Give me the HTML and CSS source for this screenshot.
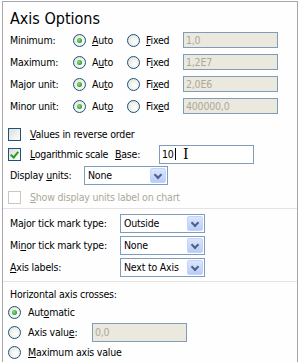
FILE: index.html
```html
<!DOCTYPE html>
<html>

<head>
  <title>Format Axis - Axis Options</title>
  <link rel="stylesheet" href="styles.css">
</head>

<body>
  <div class="panel">
    <h1 class="title">Axis Options</h1>

    <div class="bounds">
      <div class="bound">
        <span class="label">Minimum:</span>
        <span class="radio on"></span><span class="opt"><u>A</u>uto</span>
        <span class="radio"></span><span class="opt fixed"><u>F</u>ixed</span>
        <span class="field off">1,0</span>
      </div>
      <div class="bound">
        <span class="label">Maximum:</span>
        <span class="radio on"></span><span class="opt">A<u>u</u>to</span>
        <span class="radio"></span><span class="opt fixed">F<u>i</u>xed</span>
        <span class="field off">1,2E7</span>
      </div>
      <div class="bound">
        <span class="label">Major unit:</span>
        <span class="radio on"></span><span class="opt">Au<u>t</u>o</span>
        <span class="radio"></span><span class="opt fixed">Fi<u>x</u>ed</span>
        <span class="field off">2,0E6</span>
      </div>
      <div class="bound">
        <span class="label">Minor unit:</span>
        <span class="radio on"></span><span class="opt">Aut<u>o</u></span>
        <span class="radio"></span><span class="opt fixed">Fix<u>e</u>d</span>
        <span class="field off">400000,0</span>
      </div>
    </div>

    <div class="check-row first">
      <span class="check"></span><span><u>V</u>alues in reverse order</span>
    </div>
    <div class="check-row">
      <span class="check on"></span><span class="log-label"><u>L</u>ogarithmic scale</span>
      <span class="base-label"><u>B</u>ase:</span>
      <span class="field base">10<span class="caret"></span><span class="ibeam">I</span></span>
    </div>
    <div class="line-row">
      <span class="units-label">Display <u>u</u>nits:</span>
      <span class="select units">None<span class="drop"></span></span>
    </div>
    <div class="check-row tall dim">
      <span class="check off"></span><span><u>S</u>how display units label on chart</span>
    </div>

    <hr class="rule">

    <div class="tick-rows">
      <div class="line-row">
        <span class="tick-label">Ma<u>j</u>or tick mark type:</span>
        <span class="select">Outside<span class="drop"></span></span>
      </div>
      <div class="line-row">
        <span class="tick-label">Mi<u>n</u>or tick mark type:</span>
        <span class="select">None<span class="drop"></span></span>
      </div>
      <div class="line-row">
        <span class="tick-label"><u>A</u>xis labels:</span>
        <span class="select">Next to Axis<span class="drop"></span></span>
      </div>
    </div>

    <hr class="rule">

    <div class="group-label">Horizontal axis crosses:</div>
    <div class="cross-row">
      <span class="radio on"></span><span>Aut<u>o</u>matic</span>
    </div>
    <div class="cross-row">
      <span class="radio"></span><span class="value-label">Axis valu<u>e</u>:</span>
      <span class="field off short">0,0</span>
    </div>
    <div class="cross-row">
      <span class="radio"></span><span><u>M</u>aximum axis value</span>
    </div>
  </div>
</body>

</html>
```

FILE: styles.css
```css
body {
  margin: 0;
  background: #fff;
  font-family: "DejaVu Sans Condensed", "Liberation Sans", sans-serif;
  font-size: 10.5px;
  letter-spacing: -0.2px;
  color: #000;
}

.panel {
  margin: 1px 0 0 2px;
  width: 296px;
  height: 361px;
  border: 1px solid #a7a6aa;
  border-bottom: 0;
  background: #fefefe;
  padding: 0 0 0 7px;
  box-sizing: border-box;
  overflow: hidden;
}

.title {
  margin: 7px 0 0;
  font-size: 16px;
  font-weight: normal;
  letter-spacing: 0;
  line-height: 20px;
  height: 20px;
}

.bound {
  display: flex;
  align-items: center;
  height: 22px;
}

.label {
  width: 63px;
}

.opt {
  margin-left: 6px;
  width: 35px;
}

.opt.fixed {
  width: 37px;
}

.radio {
  width: 11px;
  height: 11px;
  border: 1px solid #1c5180;
  border-radius: 50%;
  background: radial-gradient(circle at 60% 60%, #fff 0, #f0f0ea 50%, #d8d8cf 100%);
  box-sizing: content-box;
  position: relative;
  flex: none;
}

.radio.on::after {
  content: "";
  position: absolute;
  left: 3px;
  top: 3px;
  width: 5px;
  height: 5px;
  border-radius: 50%;
  background: radial-gradient(circle at 40% 40%, #8fe28f 0, #21a121 70%);
}

.field {
  display: inline-flex;
  align-items: center;
  height: 16px;
  border: 1px solid #7f9db9;
  background: #fff;
  padding: 0 2px;
  box-sizing: border-box;
}

.field.off {
  background: #ebe9dd;
  color: #aca899;
  width: 95px;
}

.check-row {
  display: flex;
  align-items: center;
  height: 20px;
}

.check-row.first {
  margin-top: 7px;
}

.check-row.tall {
  height: 22px;
}

.check {
  width: 11px;
  height: 11px;
  border: 1px solid #1c5180;
  background: linear-gradient(135deg, #dcdcd7, #fff);
  margin: 0 9px 0 -2px;
  position: relative;
  flex: none;
}

.check.on::after {
  content: "";
  position: absolute;
  left: 3px;
  top: 1px;
  width: 3px;
  height: 6px;
  border: solid #21a121;
  border-width: 0 2px 2px 0;
  transform: rotate(40deg);
}

.check.off {
  border-color: #cac8bb;
  background: #fff;
}

.dim {
  color: #aca899;
}

.log-label {
  width: 85px;
  letter-spacing: -0.3px;
}

.base-label {
  width: 44px;
}

.field.base {
  width: 95px;
  height: 19px;
  position: relative;
}

.caret {
  width: 1px;
  height: 12px;
  background: #000;
  margin-left: 1px;
}

.ibeam {
  position: absolute;
  left: 23px;
  top: 0;
  font-family: "DejaVu Serif", serif;
  font-size: 14px;
}

.line-row {
  display: flex;
  align-items: center;
  height: 22px;
}

.units-label {
  width: 74px;
}

.tick-rows {
  padding-top: 3px;
}

.tick-label {
  width: 110px;
}

.select {
  display: inline-flex;
  align-items: center;
  justify-content: space-between;
  width: 85px;
  height: 19px;
  border: 1px solid #7f9db9;
  background: #fff;
  padding: 0 1px 0 3px;
  box-sizing: border-box;
}

.select.units {
  width: 84px;
}

.drop {
  width: 16px;
  height: 15px;
  border-radius: 2px;
  background: linear-gradient(#dce6fd, #b8ccf9);
  border: 1px solid #c3d3fd;
  box-sizing: border-box;
  position: relative;
}

.drop::after {
  content: "";
  position: absolute;
  left: 4px;
  top: 3px;
  width: 4px;
  height: 4px;
  border: solid #4d6185;
  border-width: 0 2px 2px 0;
  transform: rotate(45deg);
}

.rule {
  margin: 0 0 0 -7px;
  border: 0;
  border-top: 1px solid #e3e3e3;
}

.tick-rows + .rule {
  margin-top: 3px;
}

.group-label {
  margin-top: 4px;
  height: 16px;
  line-height: 16px;
}

.cross-row {
  display: flex;
  align-items: center;
  height: 20px;
}

.cross-row .radio {
  margin: 0 7px 0 -2px;
}

.value-label {
  width: 64px;
}

.field.short {
  height: 19px;
}
```
